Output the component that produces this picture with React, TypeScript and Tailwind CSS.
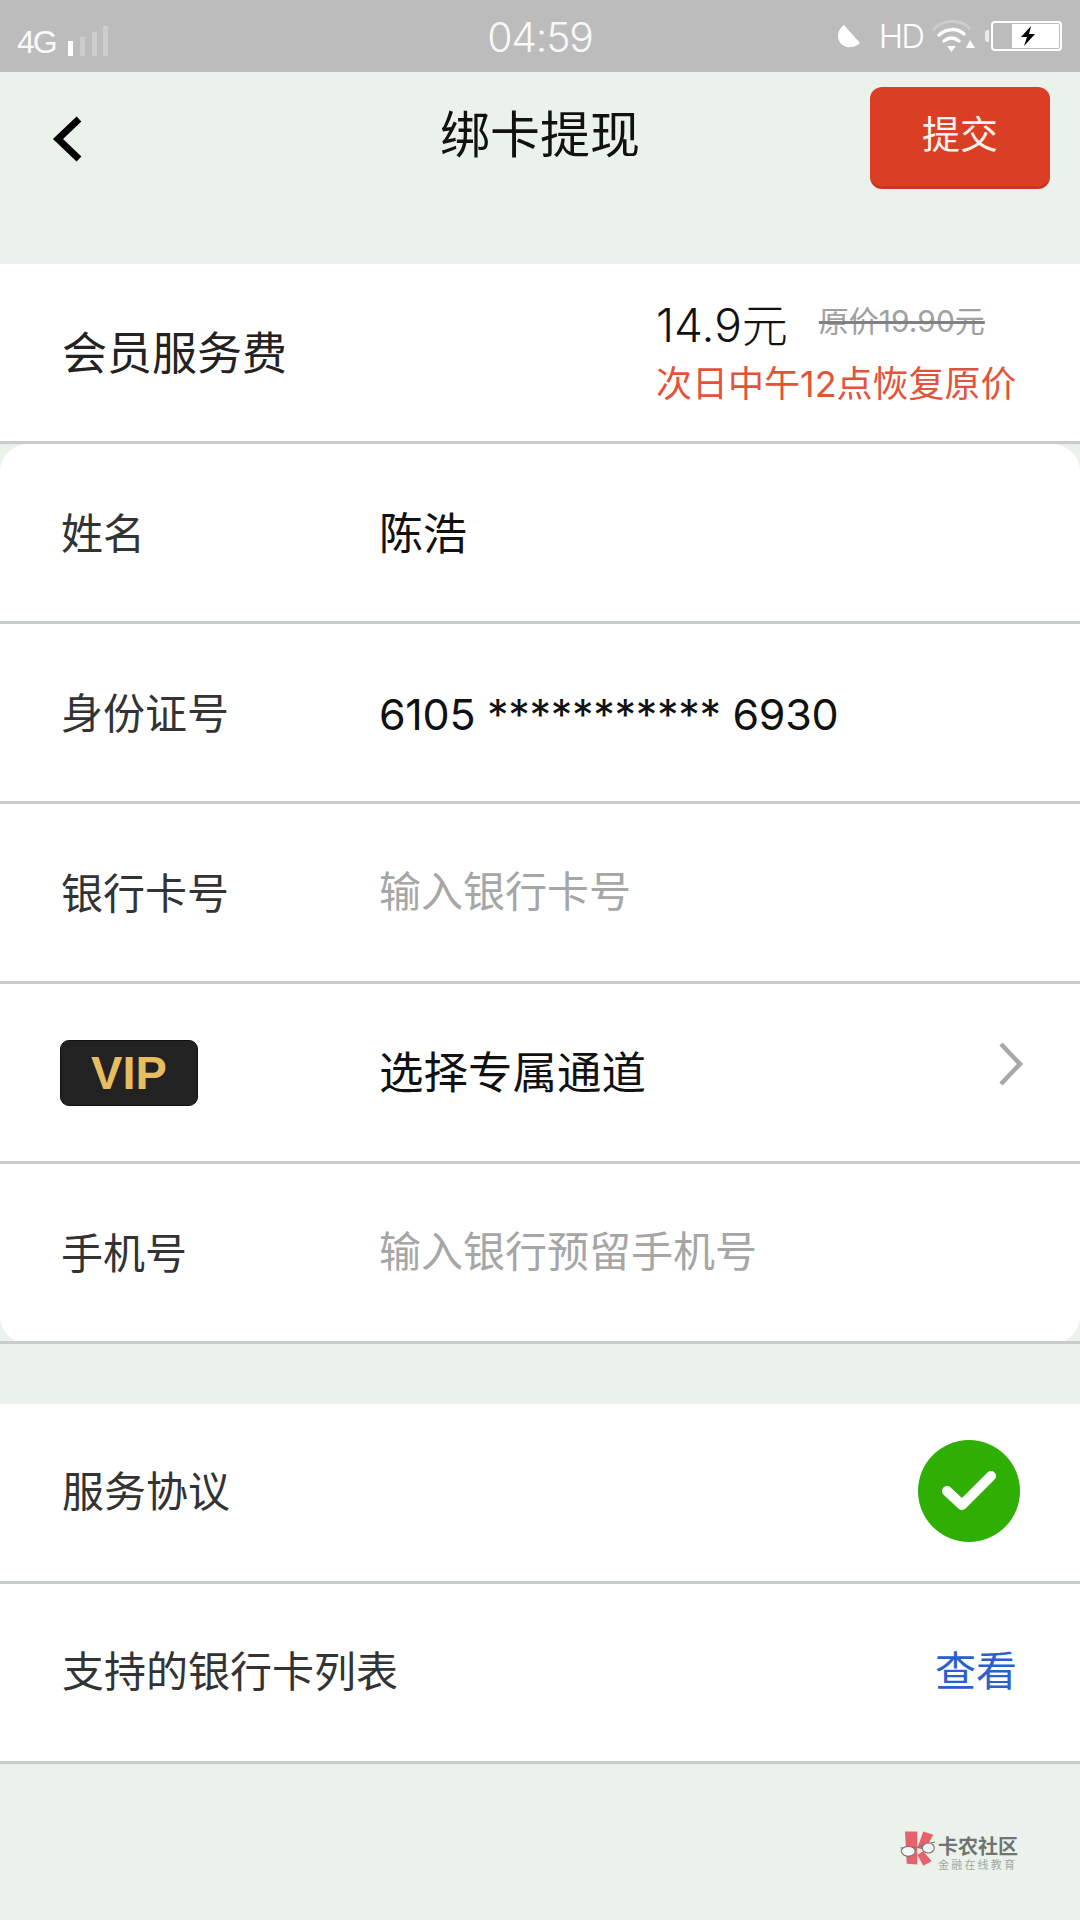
import React from 'react'

const FONT = "font-['Liberation_Sans','Noto_Sans_CJK_SC',sans-serif]"
// digits in the reference are wider than Arial's, Inter is the nearer match
const NUM_FONT = "font-['Inter','Noto_Sans_CJK_SC',sans-serif]"

// ── Status bar icons ─────────────────────────────────────────────────
function SignalBars() {
  return (
    <svg width="42" height="32" viewBox="0 0 42 32" className="ml-[11px]">
      <rect x="1" y="16" width="5" height="15" fill="#fff" />
      <rect x="13" y="12" width="5" height="19" fill="#fff" opacity="0.25" />
      <rect x="25" y="7" width="5" height="24" fill="#fff" opacity="0.25" />
      <rect x="36" y="1" width="5" height="30" fill="#fff" opacity="0.25" />
    </svg>
  )
}

function Moon() {
  return (
    <svg width="24" height="24" viewBox="0 0 24 24">
      <path d="M7 1 C4 3 1 7 1 12 C1 19 7 24 14 23 C18 23 21 21 23 19 Z" fill="#fff" />
    </svg>
  )
}

function Wifi() {
  return (
    <svg width="44" height="34" viewBox="0 0 44 34" fill="none" strokeLinecap="round">
      <path d="M2 10 C12 0 28 0 37 9" stroke="#fff" strokeWidth="3" opacity="0.25" />
      <path d="M7 16 C15 9 25 9 32 15" stroke="#fff" strokeWidth="3.5" />
      <path d="M12 22 C17 18 22 18 27 22" stroke="#fff" strokeWidth="3.5" />
      <path d="M15 27 L24 27 L19.5 33 Z" fill="#fff" />
      <path d="M38 21 L43 29 L34 29 Z" fill="#fff" />
    </svg>
  )
}

function Battery() {
  return (
    <div className="flex items-center">
      <div className="w-[4px] h-[12px] bg-white/70 rounded-l-[3px] mr-[2px]" />
      <div className="w-[71px] h-[30px] border-2 border-white rounded-[4px] flex justify-end p-[1px]">
        <div className="w-[47px] h-full bg-white rounded-[1px] flex items-center pl-[8px]">
          <svg width="16" height="20" viewBox="0 0 16 20">
            <path d="M11 0 L1 11 L7 11 L4 20 L15 8 L9 8 Z" fill="#000" />
          </svg>
        </div>
      </div>
    </div>
  )
}

function StatusBar() {
  return (
    <div className="h-[72px] bg-[#bcbcbc] grid grid-cols-[1fr_auto_1fr] items-center text-white">
      <div className="flex items-end pl-[17px] pt-[9px]">
        <span className="text-[32px] leading-[30px] tracking-[-2px] text-white/95">4G</span>
        <SignalBars />
      </div>
      <div className="text-[41px] leading-none pt-[3px] tracking-[-1.2px] opacity-90 font-['Inter',sans-serif] font-light">04:59</div>
      <div className="flex items-center justify-end pr-[18px]">
        <Moon />
        <span className="ml-[18px] text-[33px] leading-none font-['Inter',sans-serif] font-light tracking-[-2px]">HD</span>
        <div className="ml-[9px] mr-[9px]"><Wifi /></div>
        <Battery />
      </div>
    </div>
  )
}

// ── Rows ─────────────────────────────────────────────────────────────
function Row({ label, value, placeholder, nudge, numeric }: { label: string; value?: string; placeholder?: string; nudge?: boolean; numeric?: boolean }) {
  return (
    <div className="h-[180px] flex items-center pl-[61px] border-b-[3px] border-[#c8cccf]">
      <div className={nudge ? "w-[318px] text-[42px] text-[#333] pt-[3px]" : "w-[318px] text-[42px] text-[#333] pt-[4px]"}>{label}</div>
      {value && <div className={numeric ? `${NUM_FONT} text-[43px] tracking-[-0.3px] text-[#111] pt-[3px]` : "text-[44px] text-[#111] pt-[4px]"}>{value}</div>}
      {placeholder && <div className="text-[42px] text-[#a6a6a6]">{placeholder}</div>}
    </div>
  )
}

function VipRow() {
  return (
    <div className="h-[180px] flex items-center pl-[60px] pr-[56px] border-b-[3px] border-[#c8cccf]">
      <div className="w-[319px]">
        <div className="w-[138px] h-[66px] bg-[#222] border border-[#111] rounded-[9px] flex items-center justify-center">
          <span className="text-[47px] leading-none font-bold text-[#e6bd5f]">VIP</span>
        </div>
      </div>
      <div className="flex-1 text-[44.5px] text-[#111] pt-[4px]">选择专属通道</div>
      <svg width="26" height="46" viewBox="0 0 26 46" fill="none" className="mb-[17px]">
        <path d="M3 3 L22 23 L3 43" stroke="#a8a8a8" strokeWidth="4.5" />
      </svg>
    </div>
  )
}

// Watermark: red ribbon with glasses, then the site name
function Logo() {
  return (
    <div className="flex items-start">
      <svg width="36" height="36" viewBox="0 0 36 36">
        <path d="M5 0.5 L17.3 0.5 L17.3 33.5 L6.7 32.7 Z" fill="#e8626b" />
        <path d="M23.3 0.5 L33.3 3.7 L25 19 L17.3 17 Z" fill="#e8626b" />
        <path d="M17.3 23.7 L23.3 20.3 L31.7 30.3 L23.3 34.7 Z" fill="#e8626b" />
        <path d="M0.5 17 L15 16 M15 17 L22 15 M22 14 L35 11" stroke="#777" strokeWidth="1.2" />
        <ellipse cx="8.3" cy="20.3" rx="7" ry="5" fill="#f5f6f5" stroke="#777" strokeWidth="1.2" />
        <ellipse cx="28.3" cy="17" rx="6" ry="5" fill="#f5f6f5" stroke="#777" strokeWidth="1.2" />
      </svg>
      <div className="ml-[2px] pt-[5px] flex flex-col items-start">
        <span className="text-[20px] leading-[22px] font-bold text-[#6f7371]">卡农社区</span>
        <span className="text-[11px] leading-[14px] tracking-[2.2px] text-[#a3a7a5]">金融在线教育</span>
      </div>
    </div>
  )
}

export default function App() {
  return (
    <div className={`${FONT} w-[1080px] h-[1920px] bg-[#ebf2ec] overflow-hidden`}>
      <StatusBar />

      {/* Nav */}
      <div className="h-[192px] grid grid-cols-[1fr_auto_1fr] items-start pt-[15px]">
        <div className="pl-[52px] pt-[28px]">
          <svg width="32" height="48" viewBox="0 0 32 48" fill="none">
            <path d="M27 4 L6 24 L27 44" stroke="#000" strokeWidth="7" />
          </svg>
        </div>
        <div className="text-[50px] leading-[70px] pt-[14px] text-[#111]">绑卡提现</div>
        <div className="flex justify-end pr-[30px]">
          <div className="w-[180px] h-[102px] bg-[#da3e25] border-b-[3px] border-[#c63720] rounded-[12px] flex items-center justify-center text-[38px] text-[#fdf3ee] pb-[2px]">
            提交
          </div>
        </div>
      </div>

      {/* Fee */}
      <div className="h-[180px] bg-white border-b-[3px] border-[#c8cccf] flex items-center pl-[62px]">
        <div className="w-[594px] text-[45px] text-[#222] pt-[4px]">会员服务费</div>
        <div className={`${NUM_FONT} flex flex-col`}>
          <div className="flex items-center h-[62px]">
            <span className="text-[46px] font-light text-[#111]">14.9元</span>
            <span className="ml-[31px] text-[30px] text-[#a0a0a0] line-through decoration-[#808080] pb-[8px]">原价19.90元</span>
          </div>
          <div className="text-[36px] leading-[54px] text-[#e2533a] pt-[1px]">次日中午12点恢复原价</div>
        </div>
      </div>

      {/* Form card */}
      <div className="bg-white rounded-[28px]">
        <Row label="姓名" value="陈浩" />
        <Row label="身份证号" value="6105 *********** 6930" numeric />
        <Row label="银行卡号" placeholder="输入银行卡号" nudge />
        <VipRow />
        <Row label="手机号" placeholder="输入银行预留手机号" />
      </div>

      <div className="h-[60px]" />

      {/* Agreement */}
      <div className="bg-white">
        <div className="h-[180px] flex items-center justify-between pl-[62px] pr-[60px] border-b-[3px] border-[#c8cccf]">
          <span className="text-[42px] text-[#333]">服务协议</span>
          <svg width="102" height="102" viewBox="0 0 102 102" className="mb-[4px]">
            <circle cx="51" cy="51" r="51" fill="#2fae04" />
            <path d="M29 51 L44 65 L73 36" fill="none" stroke="#fff" strokeWidth="10" strokeLinecap="round" strokeLinejoin="round" />
          </svg>
        </div>
        <div className="h-[180px] flex items-center justify-between pl-[62px] pr-[63px] border-b-[3px] border-[#c8cccf]">
          <span className="text-[42px] text-[#333]">支持的银行卡列表</span>
          <span className="text-[41px] text-[#2a5fd0]">查看</span>
        </div>
      </div>

      {/* Watermark */}
      <div className="flex justify-end pr-[62px] pt-[67px]">
        <Logo />
      </div>
    </div>
  )
}
